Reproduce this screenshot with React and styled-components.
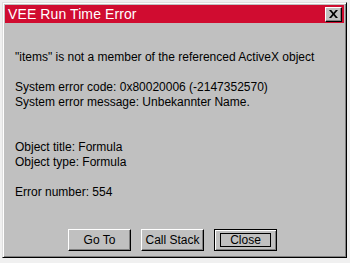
import React from 'react';
import styled, { createGlobalStyle } from 'styled-components';

const GlobalStyle = createGlobalStyle`
  html, body {
    margin: 0;
    padding: 0;
    background: #f0f0f0;
  }
`;

const Page = styled.div`
  width: 350px;
  height: 263px;
  padding: 2px 0 0 2px;
  box-sizing: border-box;
  font-family: "Liberation Sans", Arial, sans-serif;
`;

const Window = styled.div`
  width: 345px;
  height: 256px;
  box-sizing: border-box;
  background: #c0c0c0;
  border-top: 1px solid #dfdfdf;
  border-left: 1px solid #dfdfdf;
  border-right: 1px solid #000;
  border-bottom: 1px solid #000;
  box-shadow: inset 1px 1px 0 #fff, inset -1px -1px 0 #808080;
  padding: 2px;
  display: flex;
  flex-direction: column;
`;

const TitleBar = styled.div`
  height: 18px;
  background: #d00c30;
  display: flex;
  align-items: center;
  justify-content: space-between;
  padding: 0 2px 0 3px;
`;

const Title = styled.span`
  color: #fff;
  font-size: 14px;
  letter-spacing: 0.1px;
`;

const CloseBox = styled.div`
  width: 17px;
  height: 15px;
  box-sizing: border-box;
  background: #c0c0c0;
  border-top: 1px solid #fff;
  border-left: 1px solid #fff;
  border-right: 1px solid #000;
  border-bottom: 1px solid #000;
  box-shadow: inset -1px -1px 0 #808080;
  display: flex;
  align-items: center;
  justify-content: center;
  padding-bottom: 1px;
`;

const Message = styled.div`
  padding: 27px 0 0 10px;
  font-size: 12px;
  line-height: 15px;
  color: #000;
`;

const Line = styled.div`
  height: 15px;
  white-space: nowrap;
`;

const ButtonRow = styled.div`
  margin-top: 29px;
  display: flex;
  justify-content: center;
  gap: 10px;
  padding-right: 4px;
`;

const Button = styled.div`
  width: 63px;
  height: 22px;
  box-sizing: border-box;
  background: #c0c0c0;
  font-size: 12px;
  display: flex;
  align-items: center;
  justify-content: center;
  border-top: 1px solid ${({ $default }) => ($default ? '#000' : '#fff')};
  border-left: 1px solid ${({ $default }) => ($default ? '#000' : '#fff')};
  border-right: 1px solid #000;
  border-bottom: 1px solid #000;
  box-shadow: ${({ $default }) =>
    $default
      ? 'inset 1px 1px 0 #fff, inset -1px -1px 0 #808080'
      : 'inset -1px -1px 0 #808080'};
`;

const Focus = styled.span`
  border: 1px solid #000;
  width: 51px;
  height: 14px;
  box-sizing: border-box;
  display: flex;
  align-items: center;
  justify-content: center;
  line-height: 12px;
`;

const lines = [
  '"items" is not a member of the referenced ActiveX object',
  '',
  'System error code: 0x80020006 (-2147352570)',
  'System error message: Unbekannter Name.',
  '',
  '',
  'Object title: Formula',
  'Object type: Formula',
  '',
  'Error number: 554',
];

export default function App() {
  return (
    <Page>
      <GlobalStyle />
      <Window>
        <TitleBar>
          <Title>VEE Run Time Error</Title>
          <CloseBox>
            <svg width="9" height="8" viewBox="0 0 9 8">
              <path d="M0 0h2.2l2.3 2.8L6.8 0H9L5.6 4 9 8H6.8L4.5 5.2 2.2 8H0l3.4-4z" fill="#000" />
            </svg>
          </CloseBox>
        </TitleBar>
        <Message>
          {lines.map((l, i) => (
            <Line key={i}>{l}</Line>
          ))}
        </Message>
        <ButtonRow>
          <Button>Go To</Button>
          <Button>Call Stack</Button>
          <Button $default>
            <Focus>Close</Focus>
          </Button>
        </ButtonRow>
      </Window>
    </Page>
  );
}
